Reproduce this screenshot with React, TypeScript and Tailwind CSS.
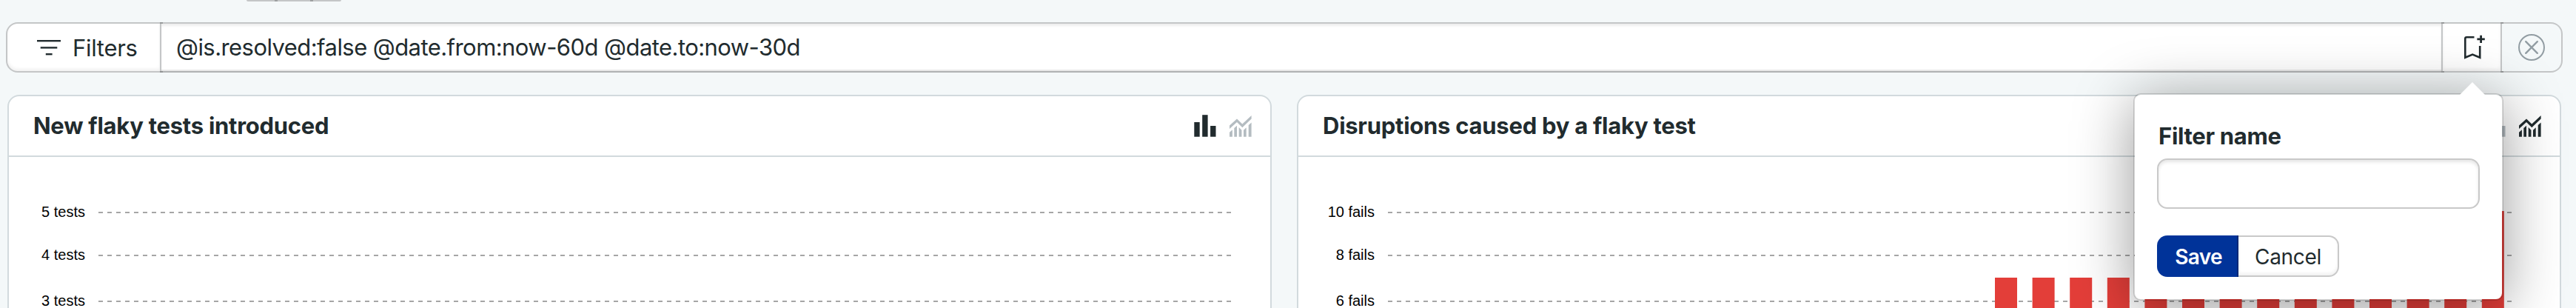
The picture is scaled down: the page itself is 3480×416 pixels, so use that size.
import type { ReactNode } from "react";

const GRID_ROWS = ["h-[58px]", "h-[62px]", "h-[58px]"];
const BARS = Array.from({ length: 14 }, (_, i) => ({ x: 820 + i * 50.6, top: i === 13 ? 0 : 90 }));

function FilterIcon() {
  return (
    <svg width="32" height="22" viewBox="0 0 32 22" className="shrink-0 fill-[#212b2e]">
      <rect x="0" y="1" width="32" height="2.4" />
      <rect x="4.7" y="10.2" width="22.6" height="2.4" />
      <rect x="11.8" y="19" width="8.8" height="2.4" />
    </svg>
  );
}

function BookmarkPlusIcon() {
  return (
    <svg width="28" height="34" viewBox="0 0 28 34" fill="none" stroke="#212b2e" className="shrink-0">
      <path d="M13.5 3.3H3.2C2.2 3.3 1.3 4.2 1.3 5.2V30.8L11.2 26.6L21.2 30.8V15" strokeWidth="2.6" />
      <path d="M22.6 0.8V11M17.4 5.9H27.8" strokeWidth="2.8" />
    </svg>
  );
}

function ClearIcon() {
  return (
    <svg width="36" height="36" viewBox="0 0 36 36" fill="none" stroke="#929da3" className="shrink-0">
      <circle cx="18" cy="18" r="17" strokeWidth="2" />
      <path d="M10.2 10.2L25.8 25.8M25.8 10.2L10.2 25.8" strokeWidth="2.4" strokeLinecap="round" />
    </svg>
  );
}

function BarsIcon({ className }: { className: string }) {
  return (
    <svg width="30" height="30" viewBox="0 0 30 30" className={className}>
      <rect x="0.3" y="10" width="7.4" height="19.7" />
      <rect x="11.2" y="0.2" width="7.4" height="29.5" />
      <rect x="22.1" y="15" width="7.4" height="14.7" />
    </svg>
  );
}

function TrendIcon({ className }: { className: string }) {
  return (
    <svg width="30" height="30" viewBox="0 0 30 30" className={className}>
      <path d="M0 14.5L10 5.4L17.3 12.5L29.6 0.9V5.5L17.3 17.2L10 10.1L0 19.1Z" />
      <path d="M0 23.8L3.9 20.3V29.7H0Z" />
      <path d="M6.3 18.1L10 14.7V29.7H6.3Z" />
      <path d="M12.7 17.1L16.4 20.7V29.7H12.7Z" />
      <path d="M19 20.7L22.7 17.3V29.7H19Z" />
      <path d="M25.7 14.1L29.6 10.5V29.7H25.7Z" />
    </svg>
  );
}

function Joint({ shift }: { shift: string }) {
  return (
    <span className="relative z-10 w-0">
      <span className={`absolute top-0 h-[2px] w-[4px] bg-[#97999a] ${shift}`} />
      <span className={`absolute bottom-0 h-[2px] w-[4px] bg-[#909293] ${shift}`} />
    </span>
  );
}

function ChartCard({
  title,
  labels,
  active,
  lineWidth,
  children,
}: {
  title: ReactNode;
  labels: string[];
  active: "bars" | "trend";
  lineWidth: number;
  children?: ReactNode;
}) {
  return (
    <section className="flex h-[320px] w-[1708px] flex-col rounded-t-[16px] border-2 border-[#d2dadd] bg-white">
      <header className="flex h-[82px] shrink-0 items-center justify-between border-b-2 border-[#d2dadd] pr-[25px] pl-[33px]">
        <h2 className="text-[31px] font-bold tracking-[-0.26px] whitespace-nowrap">{title}</h2>
        <div className="flex gap-[18px]">
          <BarsIcon className={active === "bars" ? "fill-[#212b2e]" : "fill-[#b4bcc1]"} />
          <TrendIcon className={active === "trend" ? "fill-[#212b2e]" : "fill-[#b4bcc1]"} />
        </div>
      </header>
      <div className="relative pt-[46px]">
        {labels.map((label, i) => (
          <div key={label} className={`flex items-start ${GRID_ROWS[i]}`}>
            <span className="mt-[18px] w-[103px] text-right font-['Liberation_Sans',Arial,sans-serif] text-[20px] leading-[20px] text-black">
              {label}
            </span>
            <svg height="2" width={lineWidth} className="mt-[28px] ml-[18px] shrink-0">
              <line x1="0" y1="1" x2={lineWidth} y2="1" stroke="#a6a6a6" strokeWidth="2" strokeDasharray="6 6" />
            </svg>
          </div>
        ))}
        {children}
      </div>
    </section>
  );
}

export default function App() {
  return (
    <div className="relative h-[416px] w-[3480px] overflow-hidden bg-[#f4f8f9] font-[Inter,'Liberation_Sans',sans-serif] text-[#212b2e]">
      <div className="ml-[333px] flex h-[2px] w-[128px] overflow-hidden rounded-b-[16px] bg-[#c4c6c7]">
        <div className="ml-[38px] w-[4px] bg-[#9d9fa0]" />
        <div className="ml-[44px] w-[4px] bg-[#9d9fa0]" />
      </div>

      <div className="mt-[28px] ml-[8px] flex h-[68px] w-[3454px]">
        <button className="flex w-[210px] items-center gap-[16px] rounded-l-[16px] border-2 border-[#c4c6c7] bg-white pl-[40px] text-[31px] tracking-[-0.3px] shadow-[inset_0_-3px_4px_rgba(0,0,0,0.06)]">
          <FilterIcon />
          <span className="pt-[2px]">Filters</span>
        </button>
        <Joint shift="left-[-2px]" />
        <div className="flex flex-1 items-center border-y-2 border-t-[#c4c6c7] border-b-[#b0b2b3] bg-white pl-[20px] text-[31px] tracking-[-0.56px] whitespace-nowrap shadow-[inset_0_3px_3px_rgba(0,0,0,0.07),inset_0_-2px_0_rgba(0,0,0,0.09)]">
          <span>@is.resolved:false @date.from:now-60d @date.to:now-30d</span>
        </div>
        <Joint shift="left-0" />
        <button className="flex w-[82px] items-center border-2 border-[#c4c6c7] bg-white pl-[29px] shadow-[inset_0_-3px_4px_rgba(0,0,0,0.06)]">
          <BookmarkPlusIcon />
        </button>
        <Joint shift="left-[-2px]" />
        <button className="flex w-[82px] items-center rounded-r-[16px] border-2 border-l-0 border-[#c4c6c7] pl-[22px]">
          <ClearIcon />
        </button>
      </div>

      <div className="mt-[30px] ml-[10px] flex gap-[34px]">
        <ChartCard title="New flaky tests introduced" labels={["5 tests", "4 tests", "3 tests"]} active="bars" lineWidth={1530} />
        <ChartCard title="Disruptions caused by a flaky test" labels={["10 fails", "8 fails", "6 fails"]} active="trend" lineWidth={1520}>
          <svg width="1530" height="131" className="absolute top-[73px] left-[121px]" fill="#e33e39">
            {BARS.map((b) => (
              <rect key={b.x} x={b.x} y={b.top} width="30" height={131 - b.top} />
            ))}
          </svg>
        </ChartCard>
      </div>

      <div className="absolute top-[126px] left-[2882px] flex h-[280px] w-[500px] flex-col rounded-[10px] border-2 border-black/15 bg-white bg-clip-padding px-[30px] pt-[36px] shadow-[0_10px_80px_rgba(0,0,0,0.4)]">
        <svg width="34" height="18" viewBox="0 0 34 18" className="absolute top-[-17px] left-[439px] fill-white">
          <path d="M0 17L17 0L34 17V18H0Z" />
        </svg>
        <label className="pl-[2px] text-[31px] leading-[40px] font-bold tracking-[-0.3px]">Filter name</label>
        <input className="mt-[10px] h-[68px] w-[436px] shrink-0 rounded-[14px] border-2 border-[#c9c9c9] bg-white px-4 shadow-[inset_0_3px_4px_rgba(0,0,0,0.1)] outline-none" />
        <div className="mt-[36px] flex h-[56px] text-[28px] tracking-[-0.3px]">
          <button className="w-[110px] rounded-l-[14px] border-r-2 border-[#002877] bg-[#003399] pt-[2px] pl-[4px] font-semibold tracking-[-0.7px] text-white">Save</button>
          <button className="w-[136px] rounded-r-[14px] border-2 border-l-0 border-[#c9c9c9] bg-white pt-[2px] shadow-[inset_0_-3px_4px_rgba(0,0,0,0.06)]">Cancel</button>
        </div>
      </div>
    </div>
  );
}
